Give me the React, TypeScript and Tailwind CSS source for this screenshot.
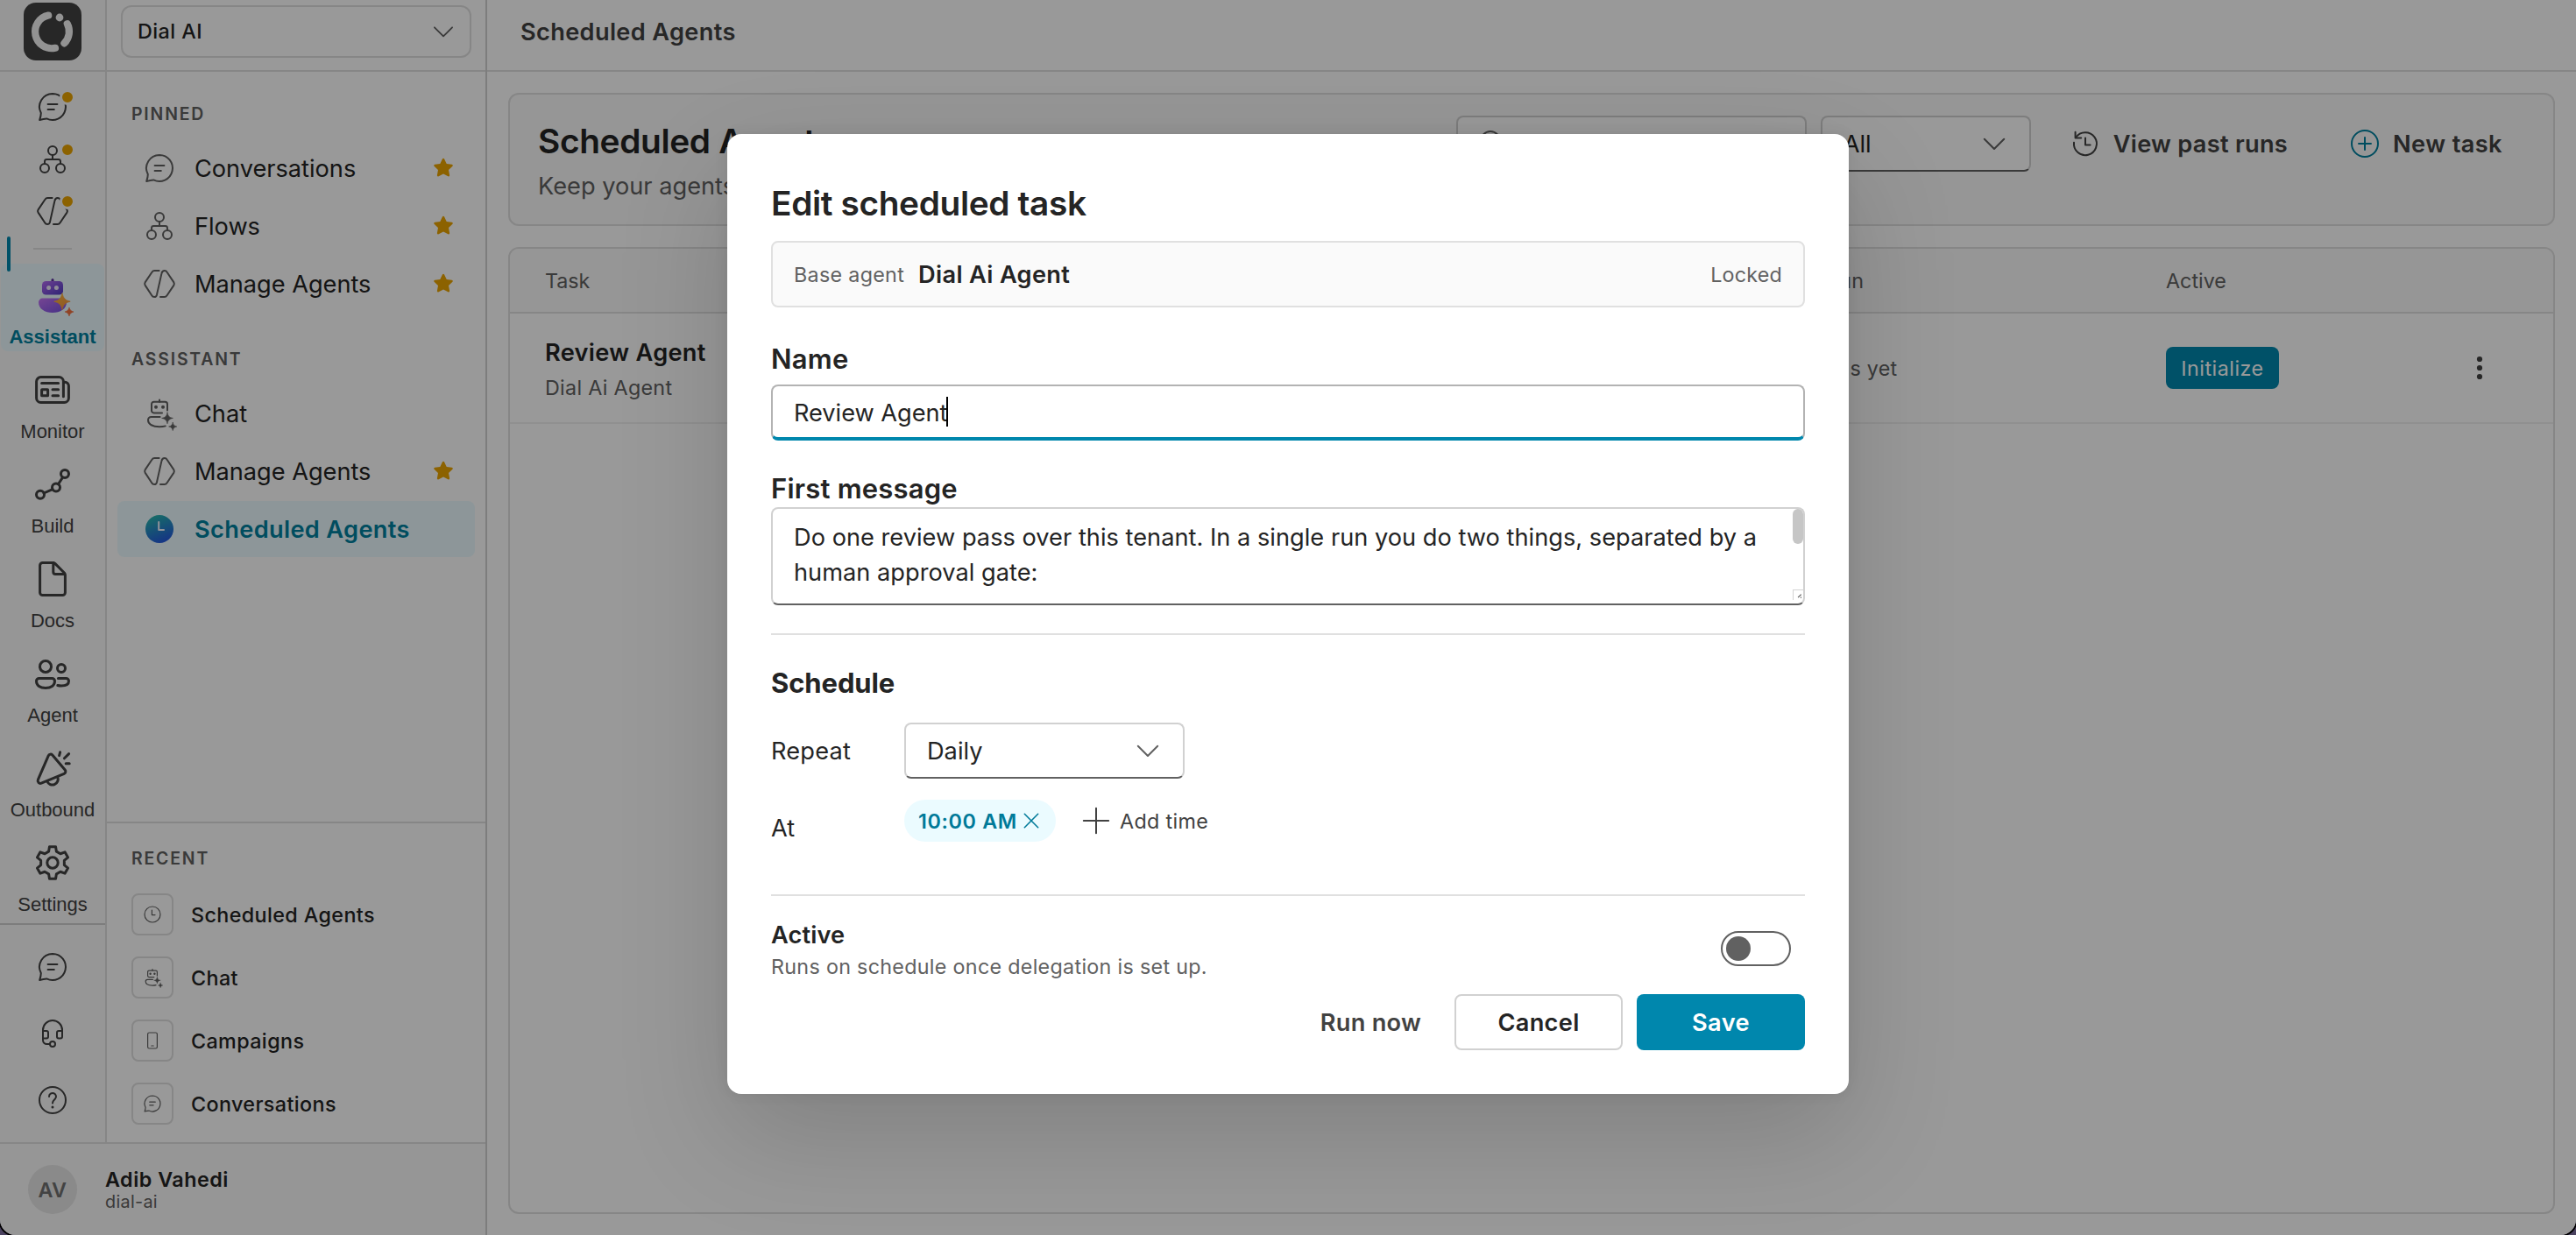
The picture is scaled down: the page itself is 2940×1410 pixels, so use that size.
import React from "react";

type IconProps = { size?: string; className?: string };

function Glyph({
  size = "h-10 w-10",
  className = "text-[#616161]",
  grid = 20,
  children,
}: IconProps & { grid?: number; children: React.ReactNode }) {
  return (
    <svg
      viewBox={`0 0 ${grid} ${grid}`}
      className={`${size} ${className} shrink-0 overflow-visible`}
      fill="none"
      stroke="currentColor"
      strokeWidth={grid === 24 ? 1.5 : 1}
      strokeLinecap="round"
      strokeLinejoin="round"
    >
      {children}
    </svg>
  );
}

const ChatBubble = (p: IconProps) => (
  <Glyph {...p}>
    <path d="M10 2.5a7.5 7.5 0 1 1-3.4 14.2c-1.2.1-2.6.4-4 .8.5-1.5.8-2.8.8-4A7.5 7.5 0 0 1 10 2.5Z" />
    <path d="M7.3 8.5h5.4M7.3 11.5h3.6" />
  </Glyph>
);

const FlowTree = (p: IconProps) => (
  <Glyph {...p}>
    <circle cx="10" cy="5" r="2.5" />
    <circle cx="5.5" cy="15" r="2.5" />
    <circle cx="14.5" cy="15" r="2.5" />
    <path d="M10 7.5V10M5.5 12.5v-1.3A1.2 1.2 0 0 1 6.7 10h6.6a1.2 1.2 0 0 1 1.2 1.2v1.3" />
  </Glyph>
);

const HexAgent = (p: IconProps) => (
  <Glyph {...p}>
    <path d="M9.8 2.5H7.3a1.8 1.8 0 0 0-1.6.9L1.8 9.2a1.6 1.6 0 0 0 0 1.6l3.8 5.8c.3.6.9.9 1.5.9.8 0 1.2-.5 1.4-1.3l2.7-12c.2-1 .7-1.7 1.7-1.7.7 0 1.1.3 1.4.9l3.9 5.8a1.6 1.6 0 0 1 0 1.6l-3.9 5.8a1.8 1.8 0 0 1-1.6.9h-2.2" />
  </Glyph>
);

const BotSparkle = (p: IconProps) => (
  <Glyph {...p}>
    <path d="M10 2.2v1.2" />
    <path d="M11.5 9.7H6.8a1.3 1.3 0 0 1-1.3-1.3V4.7a1.3 1.3 0 0 1 1.3-1.3h6.4a1.3 1.3 0 0 1 1.3 1.3v3.6" />
    <circle cx="8" cy="6.4" r="1" fill="currentColor" stroke="none" />
    <circle cx="12" cy="6.4" r="1" fill="currentColor" stroke="none" />
    <path d="M10.3 12H5.3a1.8 1.8 0 0 0-1.8 1.8c0 2.5 2.7 3.8 6.5 3.8 1.2 0 2.4-.1 3.4-.4" />
    <path
      d="M14.5 9.5c.3 2 1.2 2.9 3.2 3.2-2 .3-2.9 1.2-3.2 3.2-.3-2-1.2-2.9-3.2-3.2 2-.3 2.9-1.2 3.2-3.2Z"
      fill="currentColor"
      strokeWidth=".3"
    />
    <path
      d="M17.6 15.2c.2 1.3.9 2 2.3 2.3-1.4.3-2.1 1-2.3 2.3-.2-1.3-.9-2-2.3-2.3 1.4-.3 2.1-1 2.3-2.3Z"
      fill="currentColor"
      strokeWidth=".3"
    />
  </Glyph>
);

const BotColor = () => (
  <svg viewBox="0 0 24 24" className="h-12 w-12 overflow-visible">
    <defs>
      <linearGradient id="botHead" x1="0" y1="0" x2="1" y2="1">
        <stop offset="0" stopColor="#b56bf2" />
        <stop offset="1" stopColor="#4f3cc4" />
      </linearGradient>
      <linearGradient id="botBody" x1="0" y1="0" x2="1" y2="1">
        <stop offset="0" stopColor="#c474f5" />
        <stop offset="1" stopColor="#7450e0" />
      </linearGradient>
      <linearGradient id="spark" x1="0" y1="0" x2="1" y2="1">
        <stop offset="0" stopColor="#ffbe3d" />
        <stop offset="1" stopColor="#f58a3c" />
      </linearGradient>
    </defs>
    <path d="M12 3.2v1.6" stroke="#5b2fa0" strokeWidth="1.5" strokeLinecap="round" />
    <rect x="6" y="4" width="12" height="7.8" rx="2.2" fill="url(#botHead)" />
    <circle cx="9.8" cy="7.8" r="1.25" fill="#f0eafc" />
    <circle cx="14.2" cy="7.8" r="1.25" fill="#f0eafc" />
    <path
      d="M6.2 13.8h11.6A2.2 2.2 0 0 1 20 16c0 3.8-3.6 6-8 6s-8-2.2-8-6a2.2 2.2 0 0 1 2.2-2.2Z"
      fill="url(#botBody)"
    />
    <path
      d="M17.5 10.9c.7 3 1.7 4 4.6 4.7-2.9.7-3.9 1.7-4.6 4.7-.7-3-1.7-4-4.6-4.7 2.9-.7 3.9-1.7 4.6-4.7Z"
      fill="url(#spark)"
      stroke="url(#spark)"
      strokeWidth=".4"
      strokeLinejoin="round"
    />
    <path
      d="M21.5 19c.4 1.5 1 2.1 2.5 2.5-1.5.4-2.1 1-2.5 2.5-.4-1.5-1-2.1-2.5-2.5 1.5-.4 2.1-1 2.5-2.5Z"
      fill="#f0703f"
      stroke="#f0703f"
      strokeWidth=".3"
      strokeLinejoin="round"
    />
  </svg>
);

const ClockFilled = () => (
  <svg viewBox="0 0 20 20" className="h-10 w-10 shrink-0">
    <defs>
      <linearGradient id="clock" x1="0.3" y1="0" x2="0.7" y2="1">
        <stop offset="0" stopColor="#27b5ad" />
        <stop offset="1" stopColor="#2454e0" />
      </linearGradient>
    </defs>
    <circle cx="10" cy="10" r="8" fill="url(#clock)" />
    <path
      d="M9.6 6v4.5h2.9"
      fill="none"
      stroke="#f2f6ff"
      strokeWidth="1"
      strokeLinecap="round"
      strokeLinejoin="round"
    />
  </svg>
);

const Clock = (p: IconProps) => (
  <Glyph {...p}>
    <circle cx="10" cy="10" r="7.5" />
    <path d="M9.5 6v4.5h3" />
  </Glyph>
);

const Phone = (p: IconProps) => (
  <Glyph {...p}>
    <rect x="5.5" y="2.5" width="9" height="15" rx="1.5" />
    <path d="M9 15h2" />
  </Glyph>
);

const Headset = (p: IconProps) => (
  <Glyph {...p}>
    <path d="M4.5 8.5V8a5.5 5.5 0 0 1 11 0v.5" />
    <path d="M4.5 8.5h2a1 1 0 0 1 1 1v2.3a1 1 0 0 1-1 1h-2ZM15.5 8.5h-2a1 1 0 0 0-1 1v2.3a1 1 0 0 0 1 1h1a1 1 0 0 0 1-1Z" />
    <path d="M4.5 12.5v1.3A2.2 2.2 0 0 0 6.7 16h1.8" />
    <circle cx="10" cy="16" r="1.5" />
  </Glyph>
);

const Help = (p: IconProps) => (
  <Glyph {...p}>
    <circle cx="10" cy="10" r="7.5" />
    <path d="M8 8a2 2 0 1 1 3.4 1.4c-.7.7-1.4 1.1-1.4 2.3" />
    <circle cx="10" cy="14" r=".75" fill="currentColor" stroke="none" />
  </Glyph>
);

const ChevronDown = (p: IconProps) => (
  <Glyph {...p}>
    <path d="m4.4 7.4 5.6 5.6 5.6-5.6" />
  </Glyph>
);

const Star = () => (
  <svg viewBox="0 0 24 24" className="h-6 w-6 shrink-0" fill="#eaa300">
    <path d="M10.9 1.4a1.25 1.25 0 0 1 2.2 0l2.6 5.5 6 .8a1.25 1.25 0 0 1 .7 2.1l-4.4 4.2 1.1 6a1.25 1.25 0 0 1-1.8 1.3L12 18.4l-5.3 2.9a1.25 1.25 0 0 1-1.8-1.3l1.1-6L1.6 9.8a1.25 1.25 0 0 1 .7-2.1l6-.8Z" />
  </svg>
);

const News = (p: IconProps) => (
  <Glyph {...p} grid={24}>
    <path d="M18.2 7.6h.8a2.2 2.2 0 0 1 2.2 2.2v6.9a2.5 2.5 0 0 1-2.5 2.5H5.3a2.5 2.5 0 0 1-2.5-2.5V7.3a2.5 2.5 0 0 1 2.5-2.5h10.4a2.5 2.5 0 0 1 2.5 2.5v8.6" />
    <path d="M5.8 8.2h9.5M12 11.9h3.3M12 15.4h3.3" />
    <rect x="5.8" y="11.9" width="3.5" height="3.5" rx=".2" />
  </Glyph>
);

const Build = (p: IconProps) => (
  <Glyph {...p} grid={24}>
    <circle cx="19" cy="6" r="2.25" />
    <circle cx="14" cy="13.8" r="2.25" />
    <circle cx="5" cy="17.9" r="2.25" />
    <path d="m17.8 8-2.6 3.9M12 14.8l-5 2.2" />
  </Glyph>
);

const Doc = (p: IconProps) => (
  <Glyph {...p} grid={24}>
    <path d="M12.8 2.75H6.3a1.5 1.5 0 0 0-1.5 1.5v15.5a1.5 1.5 0 0 0 1.5 1.5h11.4a1.5 1.5 0 0 0 1.5-1.5V9.6a1.5 1.5 0 0 0-.4-1l-5.4-5.4a1.5 1.5 0 0 0-1-.45V8a1.25 1.25 0 0 0 1.25 1.25H19" />
  </Glyph>
);

const People = (p: IconProps) => (
  <Glyph {...p} grid={24}>
    <circle cx="8" cy="8" r="3.25" />
    <circle cx="17" cy="9" r="2.25" />
    <path d="M4.3 14.75h7.4a1.55 1.55 0 0 1 1.55 1.55c0 2.5-2.2 4-5.25 4s-5.25-1.5-5.25-4a1.55 1.55 0 0 1 1.55-1.55Z" />
    <path d="M15.2 14.75h4.5a1.5 1.5 0 0 1 1.55 1.5c0 1.9-1.7 2.75-4.25 2.75-.8 0-1.5-.1-2.1-.25" />
  </Glyph>
);

const Megaphone = (p: IconProps) => (
  <Glyph {...p} grid={24}>
    <g transform="translate(0 .5)">
      <path d="M9.6 4.4a1.4 1.4 0 0 1 2.3-.4l7.2 8.5a1.4 1.4 0 0 1-.5 2.2l-13 5.4a1.5 1.5 0 0 1-1.9-2Z" />
      <path d="M8.9 19a3.1 3.1 0 0 0 6-2.4" />
      <path d="m16.3 2.4-.5 1.9M21.3 3.3l-2.6 2.6M19.6 8.9h2" />
    </g>
  </Glyph>
);

const gearPath = (() => {
  const pts: string[] = [];
  for (let i = 0; i < 6; i++) {
    const base = -90 + i * 60;
    const steps: [number, number][] = [
      [-19, 6.8],
      [-11, 9.3],
      [11, 9.3],
      [19, 6.8],
    ];
    for (const [offset, radius] of steps) {
      const a = ((base + offset) * Math.PI) / 180;
      pts.push(`${(12 + radius * Math.cos(a)).toFixed(2)} ${(12 + radius * Math.sin(a)).toFixed(2)}`);
    }
  }
  return `M${pts.join("L")}Z`;
})();

const Gear = (p: IconProps) => (
  <Glyph {...p} grid={24}>
    <path d={gearPath} />
    <circle cx="12" cy="12" r="3.1" />
  </Glyph>
);

const History = (p: IconProps) => (
  <Glyph {...p}>
    <path d="M4.6 6.4A6.5 6.5 0 1 1 3.5 9.4" />
    <path d="M4.3 3.4v3.3h3.3M10 6.7v4h2.8" />
  </Glyph>
);

const PlusCircle = (p: IconProps) => (
  <Glyph {...p}>
    <circle cx="10" cy="10" r="7.5" />
    <path d="M10 6.5v7M6.5 10h7" />
  </Glyph>
);

const Logo = () => (
  <svg viewBox="0 0 66 66" className="h-[66px] w-[66px]">
    <rect width="66" height="66" rx="14" fill="#424242" />
    <g fill="none" stroke="#f5f5f5" strokeWidth="8.2" strokeLinecap="round">
      <path d="M28.2 14.6A19 19 0 1 0 36 51.8" />
      <path d="M49.8 24.2A19 19 0 0 1 46.4 46.4" />
    </g>
    <circle cx="41" cy="17" r="4.4" fill="#f5f5f5" />
  </svg>
);

const railPins = [ChatBubble, FlowTree, HexAgent];

const railItems = [
  { label: "Monitor", Icon: News },
  { label: "Build", Icon: Build },
  { label: "Docs", Icon: Doc },
  { label: "Agent", Icon: People },
  { label: "Outbound", Icon: Megaphone },
  { label: "Settings", Icon: Gear },
];

function Rail() {
  return (
    <div className="relative flex w-[122px] flex-col border-r-2 border-[#e0e0e0] bg-[#fafafa]">
      <div className="flex h-[82px] justify-center border-b-2 border-[#e0e0e0] pt-[3px]">
        <Logo />
      </div>
      <div className="flex flex-col items-center gap-[19.5px] pt-5">
        {railPins.map((Icon, i) => (
          <div key={i} className="relative h-10 w-10">
            <Icon className="text-[#424242]" />
            <span className="absolute top-0 -right-[6px] h-[18px] w-[18px] rounded-full border-[3px] border-[#fafafa] bg-[#eaa300]" />
          </div>
        ))}
      </div>
      <div className="mx-auto mt-[22px] h-[2px] w-11 bg-[#e0e0e0]" />
      <div className="mt-4 flex flex-col gap-2 px-px pb-[5px] font-['Liberation_Sans',sans-serif] text-[22px] leading-[27px] text-[#424242]">
        <div className="flex h-[100px] flex-col items-center rounded-lg bg-[#ebfbff] pt-3 font-bold text-[#00809f]">
          <BotColor />
          <span className="mt-[10px]">Assistant</span>
        </div>
        {railItems.map(({ label, Icon }) => (
          <div key={label} className="flex h-[100px] flex-col items-center pt-3">
            <Icon size="h-12 w-12" className="text-[#424242]" />
            <span className="mt-[10px]">{label}</span>
          </div>
        ))}
      </div>
      <div className="flex flex-1 flex-col items-center gap-9 border-t-2 border-[#d1d1d1] pt-7">
        <ChatBubble className="text-[#424242]" />
        <Headset className="text-[#424242]" />
        <Help className="text-[#424242]" />
      </div>
      <span className="absolute top-[270px] left-2 h-10 w-1 rounded-full bg-[#0087ad]" />
    </div>
  );
}

type NavEntry = { label: string; Icon: React.ComponentType<IconProps>; star?: boolean; active?: boolean };

const pinned: NavEntry[] = [
  { label: "Conversations", Icon: ChatBubble, star: true },
  { label: "Flows", Icon: FlowTree, star: true },
  { label: "Manage Agents", Icon: HexAgent, star: true },
];
const assistant: NavEntry[] = [
  { label: "Chat", Icon: BotSparkle },
  { label: "Manage Agents", Icon: HexAgent, star: true },
  { label: "Scheduled Agents", Icon: ClockFilled, active: true },
];
const recent: NavEntry[] = [
  { label: "Scheduled Agents", Icon: Clock },
  { label: "Chat", Icon: BotSparkle },
  { label: "Campaigns", Icon: Phone },
  { label: "Conversations", Icon: ChatBubble },
];

function SectionLabel({ children }: { children: React.ReactNode }) {
  return (
    <div className="text-[19.4px] leading-8 font-semibold tracking-[1.85px] text-[#616161]">{children}</div>
  );
}

function NavList({ items }: { items: NavEntry[] }) {
  return (
    <div className="mt-[14px] flex flex-col gap-[2px] px-3">
      {items.map(({ label, Icon, star, active }) => (
        <div
          key={label}
          className={`flex h-16 items-center rounded-lg pr-6 pl-7 text-[27.2px] ${
            active
              ? "bg-[#ebfbff] font-semibold tracking-[0.35px] text-[#00809f]"
              : "tracking-[-0.02px] text-[#242424]"
          }`}
        >
          <Icon />
          <span className="ml-5 flex-1 pt-[2px]">{label}</span>
          {star && <Star />}
        </div>
      ))}
    </div>
  );
}

function Sidebar() {
  return (
    <div className="flex h-full w-[556px] shrink-0 flex-col border-r-2 border-[#d1d1d1]">
      <div className="flex h-[1304px]">
        <Rail />
        <div className="flex flex-1 flex-col bg-white">
          <div className="h-[82px] border-b-2 border-[#e0e0e0] px-4 pt-[6px]">
            <div className="flex h-[60px] items-center justify-between rounded-xl border-2 border-[#e0e0e0] pr-3 pl-[17px]">
              <span className="text-[23.3px] font-medium tracking-[0.45px] text-[#242424]">Dial AI</span>
              <ChevronDown size="h-9 w-9" />
            </div>
          </div>
          <div className="pt-8 pl-7">
            <SectionLabel>PINNED</SectionLabel>
          </div>
          <NavList items={pinned} />
          <div className="mt-[38px] pl-7">
            <SectionLabel>ASSISTANT</SectionLabel>
          </div>
          <NavList items={assistant} />
          <div className="mt-auto h-[366px] border-t-2 border-[#e0e0e0] pt-6 pl-7">
            <SectionLabel>RECENT</SectionLabel>
            <div className="mt-6 flex flex-col gap-6">
              {recent.map(({ label, Icon }) => (
                <div key={label} className="flex h-12 items-center gap-5">
                  <div className="flex h-12 w-12 items-center justify-center rounded-lg border-2 border-[#e0e0e0]">
                    <Icon size="h-6 w-6" />
                  </div>
                  <span className="pt-[2px] text-[23.3px] font-medium tracking-[0.4px] text-[#242424]">
                    {label}
                  </span>
                </div>
              ))}
            </div>
          </div>
        </div>
      </div>
      <div className="flex flex-1 border-t-2 border-[#e0e0e0] bg-[#fafafa] pt-6 pl-8">
        <div className="flex h-14 w-14 items-center justify-center rounded-full bg-[#e6e6e6] pt-[2px] text-[23.3px] font-semibold tracking-[0.5px] text-[#707070]">
          AV
        </div>
        <div className="mt-[1px] ml-8">
          <div className="text-[23.3px] leading-8 font-semibold tracking-[0.5px] text-[#242424]">Adib Vahedi</div>
          <div className="text-[19.8px] leading-[18px] tracking-[0.3px] text-[#616161]">dial-ai</div>
        </div>
      </div>
    </div>
  );
}

const tableGrid = "grid grid-cols-[1414px_436px_1fr] pl-10";

function Main() {
  return (
    <div className="flex h-full flex-1 flex-col bg-white">
      <div className="h-[82px] border-b-2 border-[#e0e0e0] pl-[38px] text-[27.2px] leading-[74px] font-semibold tracking-[0.34px] text-[#424242]">
        Scheduled Agents
      </div>
      <div className="flex flex-1 flex-col gap-6 p-6">
        <div className="flex h-[152px] items-start justify-between rounded-xl border-2 border-[#e0e0e0] bg-[#fafafa] px-8 pt-6">
          <div>
            <div className="mt-[3px] text-[38.8px] leading-[52px] font-semibold tracking-[-0.34px] text-[#242424]">
              Scheduled Agents
            </div>
            <div className="mt-[6px] text-[27.2px] leading-10 text-[#616161]">Keep your agents</div>
          </div>
          <div className="flex gap-4 text-[27.2px]">
            <div className="flex h-16 w-[400px] items-center rounded-lg border-2 border-[#d1d1d1] border-b-[#616161] bg-white pl-[18px]">
              <Glyph>
                <circle cx="9.5" cy="8.5" r="5.5" />
                <path d="m13.4 12.4 4.1 4.1" />
              </Glyph>
            </div>
            <div className="flex h-16 w-60 items-center justify-between rounded-lg border-2 border-[#d1d1d1] border-b-[#616161] bg-white pr-5 pl-6 text-[#242424]">
              <span className="pt-[2px]">All</span>
              <ChevronDown />
            </div>
            <div className="flex h-16 items-center gap-3 px-[26px] font-semibold tracking-[0.28px] text-[#424242]">
              <History className="text-[#424242]" />
              <span className="pt-[2px]">View past runs</span>
            </div>
            <div className="flex h-16 items-center gap-3 px-[26px] font-semibold tracking-[0.4px] text-[#424242]">
              <PlusCircle className="text-[#00809f]" />
              <span className="pt-[2px]">New task</span>
            </div>
          </div>
        </div>

        <div className="flex-1 overflow-hidden rounded-xl border-2 border-[#e0e0e0] bg-white text-[23.3px] tracking-[0.3px] text-[#616161]">
          <div className={`${tableGrid} h-[74px] items-center border-b-2 border-[#e0e0e0] bg-[#fafafa] pt-[2px]`}>
            <span className="tracking-[-0.1px]">Task</span>
            <span>Last run</span>
            <span className="tracking-normal">Active</span>
          </div>
          <div className={`${tableGrid} h-[126px] items-center border-b-2 border-[#f0f0f0]`}>
            <div className="pt-[5px] leading-10">
              <div className="text-[27.2px] font-semibold text-[#242424]">Review Agent</div>
              <div>Dial Ai Agent</div>
            </div>
            <span className="pt-[2px] tracking-[0.2px]">No runs yet</span>
            <div className="flex items-center justify-between pr-16">
              <div className="flex h-12 w-[129px] items-center justify-center rounded-lg bg-[#0087ad] pt-[2px] tracking-[0.5px] text-white">
                Initialize
              </div>
              <svg viewBox="0 0 40 40" className="h-10 w-10" fill="#424242">
                <circle cx="20" cy="10" r="3.1" />
                <circle cx="20" cy="20" r="3.1" />
                <circle cx="20" cy="30" r="3.1" />
              </svg>
            </div>
          </div>
        </div>
      </div>
    </div>
  );
}

function EditTaskDialog() {
  return (
    <div className="h-[1096px] w-[1280px] rounded-2xl bg-white px-[50px] pt-[51px] text-[27.2px] text-[#242424] shadow-[0_0_16px_rgba(0,0,0,0.08),0_48px_128px_rgba(0,0,0,0.16)]">
      <div className="text-[38.8px] leading-[56px] font-semibold tracking-[-0.36px]">Edit scheduled task</div>

      <div className="mt-[15px] flex h-[76px] items-center gap-4 rounded-lg border-2 border-[#e0e0e0] bg-[#fafafa] px-6">
        <span className="pt-[2px] text-[23.3px] tracking-[0.3px] text-[#616161]">Base agent</span>
        <span className="pt-[2px] font-semibold tracking-[0.33px]">Dial Ai Agent</span>
        <span className="ml-auto pt-[2px] text-[23.3px] tracking-[0.2px] text-[#616161]">Locked</span>
      </div>

      <div className="mt-[37px] text-[31px] leading-[44px] font-semibold tracking-[0.25px]">Name</div>
      <div className="mt-[7px] flex h-16 items-center rounded-lg border-2 border-b-4 border-[#b3b3b3] border-b-[#0087ad] px-6">
        <span className="pt-[4px] tracking-[-0.03px]">Review Agent</span>
        <span className="-ml-px h-[34px] w-[2px] bg-black" />
      </div>

      <div className="mt-[34px] text-[31px] leading-[42px] font-semibold tracking-[0.2px]">First message</div>
      <div className="relative h-28 rounded-lg border-2 border-[#d1d1d1] border-b-[#616161] px-6 pt-[13px] leading-10 tracking-[0.02px]">
        Do one review pass over this tenant. In a single run you do two things, separated by a
        <br />
        human approval gate:
        <span className="absolute top-0 right-0 h-10 w-3 rounded-full bg-[#c6c6c6]" />
        <span className="absolute right-0 bottom-1 flex h-3 w-3 items-end justify-end border-t border-l border-[#d4d4d4]">
          <svg viewBox="0 0 12 12" className="h-3 w-3" stroke="#555" strokeWidth="1.2">
            <path d="m5.5 9.5 4-4M8.7 10l1-1" />
          </svg>
        </span>
      </div>

      <div className="mt-8 h-[2px] bg-[#e0e0e0]" />

      <div className="mt-[33px] text-[31px] leading-[44px] font-bold tracking-[-0.1px]">Schedule</div>
      <div className="mt-[23px] flex items-center">
        <span className="w-[152px] pt-[2px] tracking-[0.2px]">Repeat</span>
        <div className="flex h-16 w-80 items-center justify-between rounded-lg border-2 border-[#d1d1d1] border-b-[#616161] pr-5 pl-6">
          <span className="pt-[2px]">Daily</span>
          <ChevronDown />
        </div>
      </div>
      <div className="mt-6 flex h-12 items-center text-[23.3px]">
        <span className="w-[152px] pt-[18px] text-[27.2px]">At</span>
        <div className="flex h-12 w-[173px] items-center justify-between rounded-full bg-[#ebfbff] pr-4 pl-4 font-semibold tracking-[0.65px] text-[#007a99]">
          <span className="pt-[2px]">10:00 AM</span>
          <Glyph size="h-6 w-6" className="text-[#007a99]" grid={20}>
            <path d="m3.6 3.6 12.8 12.8M16.4 3.6 3.6 16.4" strokeWidth="1.3" />
          </Glyph>
        </div>
        <Glyph className="ml-[26px] text-[#424242]">
          <path d="M10 2.9v14.2M2.9 10h14.2" />
        </Glyph>
        <span className="ml-[7px] pt-[2px] tracking-[0.33px] text-[#424242]">Add time</span>
      </div>

      <div className="mt-[60px] h-[2px] bg-[#e0e0e0]" />

      <div className="mt-6 flex items-center justify-between pr-4">
        <div className="pt-px">
          <div className="leading-10 font-semibold tracking-[0.15px]">Active</div>
          <div className="text-[23.3px] leading-[31px] tracking-[0.3px] text-[#616161]">
            Runs on schedule once delegation is set up.
          </div>
        </div>
        <div className="flex h-10 w-20 items-center rounded-full border-2 border-[#616161] pl-1">
          <span className="h-7 w-7 rounded-full bg-[#616161]" />
        </div>
      </div>

      <div className="mt-4 flex items-center justify-end gap-4 font-semibold">
        <span className="mr-[22px] pt-[2px] tracking-[0.25px] text-[#424242]">Run now</span>
        <div className="flex h-16 w-48 items-center justify-center rounded-lg border-2 border-[#d1d1d1] pt-[2px] tracking-[0.3px]">
          Cancel
        </div>
        <div className="flex h-16 w-48 items-center justify-center rounded-lg bg-[#0087ad] pt-[2px] tracking-[0.4px] text-white">
          Save
        </div>
      </div>
    </div>
  );
}

export default function App() {
  return (
    <div className="h-[1410px] w-[2940px] bg-[#4b4260] font-['Inter',sans-serif]">
      <div className="relative flex h-full w-full overflow-hidden rounded-b-[18px] shadow-[0_0_0_2px_#000]">
        <Sidebar />
        <Main />
        <div className="absolute inset-0 flex items-start justify-center bg-black/40 pt-[153px]">
          <EditTaskDialog />
        </div>
      </div>
    </div>
  );
}
